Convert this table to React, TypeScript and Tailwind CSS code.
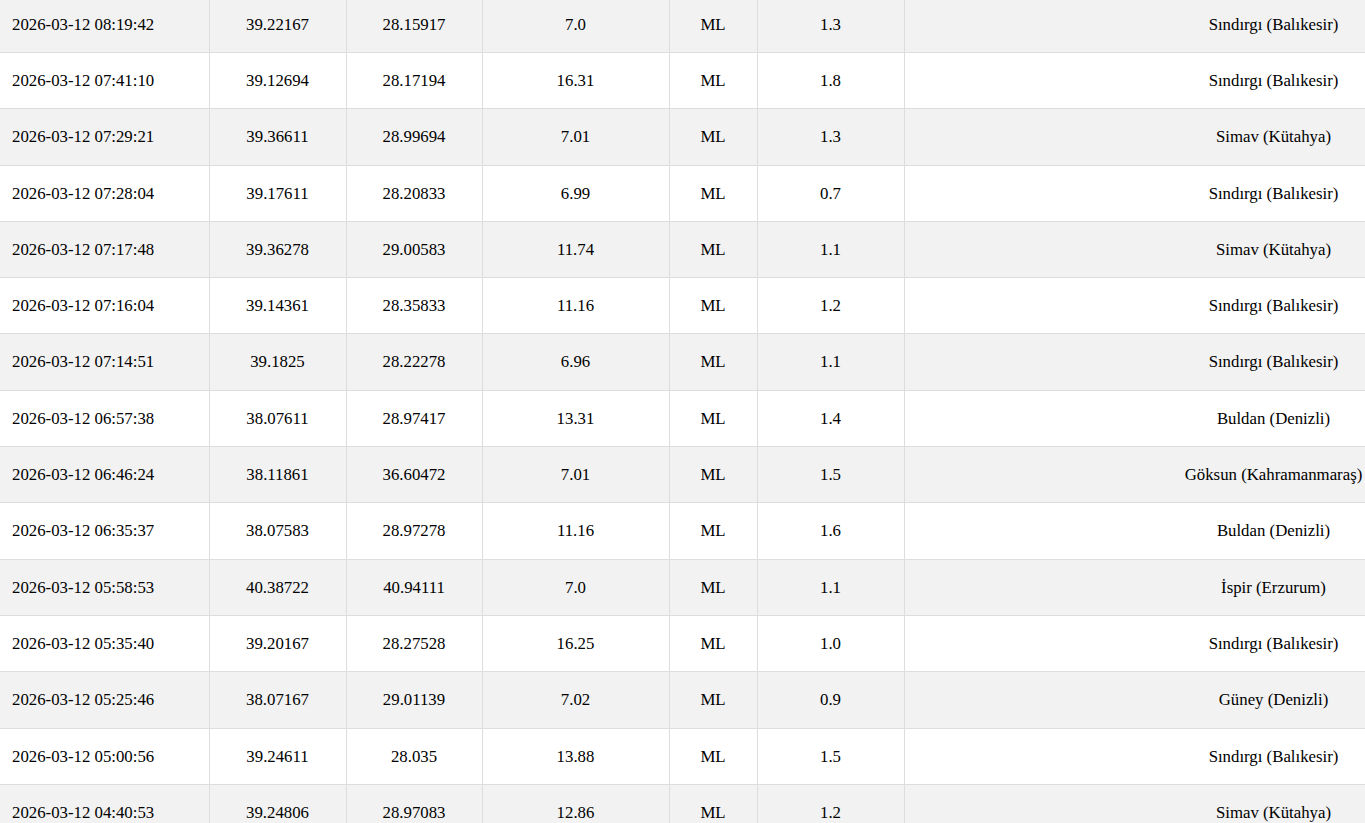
const rows = [
  ["2026-03-12 08:19:42", "39.22167", "28.15917", "7.0", "ML", "1.3", "Sındırgı (Balıkesir)"],
  ["2026-03-12 07:41:10", "39.12694", "28.17194", "16.31", "ML", "1.8", "Sındırgı (Balıkesir)"],
  ["2026-03-12 07:29:21", "39.36611", "28.99694", "7.01", "ML", "1.3", "Simav (Kütahya)"],
  ["2026-03-12 07:28:04", "39.17611", "28.20833", "6.99", "ML", "0.7", "Sındırgı (Balıkesir)"],
  ["2026-03-12 07:17:48", "39.36278", "29.00583", "11.74", "ML", "1.1", "Simav (Kütahya)"],
  ["2026-03-12 07:16:04", "39.14361", "28.35833", "11.16", "ML", "1.2", "Sındırgı (Balıkesir)"],
  ["2026-03-12 07:14:51", "39.1825", "28.22278", "6.96", "ML", "1.1", "Sındırgı (Balıkesir)"],
  ["2026-03-12 06:57:38", "38.07611", "28.97417", "13.31", "ML", "1.4", "Buldan (Denizli)"],
  ["2026-03-12 06:46:24", "38.11861", "36.60472", "7.01", "ML", "1.5", "Göksun (Kahramanmaraş)"],
  ["2026-03-12 06:35:37", "38.07583", "28.97278", "11.16", "ML", "1.6", "Buldan (Denizli)"],
  ["2026-03-12 05:58:53", "40.38722", "40.94111", "7.0", "ML", "1.1", "İspir (Erzurum)"],
  ["2026-03-12 05:35:40", "39.20167", "28.27528", "16.25", "ML", "1.0", "Sındırgı (Balıkesir)"],
  ["2026-03-12 05:25:46", "38.07167", "29.01139", "7.02", "ML", "0.9", "Güney (Denizli)"],
  ["2026-03-12 05:00:56", "39.24611", "28.035", "13.88", "ML", "1.5", "Sındırgı (Balıkesir)"],
  ["2026-03-12 04:40:53", "39.24806", "28.97083", "12.86", "ML", "1.2", "Simav (Kütahya)"],
];

const widths = ["w-[209px]", "w-[137px]", "w-[136px]", "w-[187px]", "w-[88px]", "w-[147px]", "w-[739px]"];

export default function App() {
  return (
    <div className="bg-white text-black font-['Liberation_Serif',serif] text-[16.8px]">
      <table className="-mt-[4.3px] w-[1643px] table-fixed border-collapse">
        <colgroup>
          {widths.map((w, i) => (
            <col key={i} className={w} />
          ))}
        </colgroup>
        <tbody>
          {rows.map((r, i) => (
            <tr key={i} className={i % 2 === 0 ? "bg-[#f2f2f2]" : "bg-white"}>
              {r.map((cell, j) => (
                <td
                  key={j}
                  className={`border border-[#dddddd] py-[18px] leading-[19.3px] whitespace-nowrap ${
                    j === 0 ? "pl-3 text-left border-l-0" : "text-center"
                  }`}
                >
                  {cell}
                </td>
              ))}
            </tr>
          ))}
        </tbody>
      </table>
    </div>
  );
}
